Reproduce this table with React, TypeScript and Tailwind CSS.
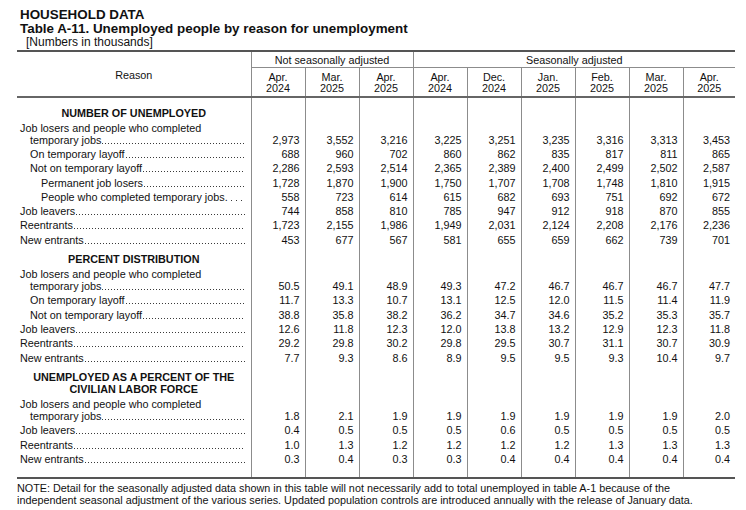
import React from "react";

type Row = { label: string; indent: 0 | 1 | 2; two?: boolean; spaced?: boolean; vals: string[] };
type Section = { heading: string[]; pt: string; rows: Row[] };

const sections: Section[] = [
  {
    heading: ["NUMBER OF UNEMPLOYED"],
    pt: "pt-[9px]",
    rows: [
      { label: "temporary jobs", indent: 0, two: true, vals: ["2,973", "3,552", "3,216", "3,225", "3,251", "3,235", "3,316", "3,313", "3,453"] },
      { label: "On temporary layoff", indent: 1, vals: ["688", "960", "702", "860", "862", "835", "817", "811", "865"] },
      { label: "Not on temporary layoff", indent: 1, vals: ["2,286", "2,593", "2,514", "2,365", "2,389", "2,400", "2,499", "2,502", "2,587"] },
      { label: "Permanent job losers", indent: 2, vals: ["1,728", "1,870", "1,900", "1,750", "1,707", "1,708", "1,748", "1,810", "1,915"] },
      { label: "People who completed temporary jobs.", indent: 2, spaced: true, vals: ["558", "723", "614", "615", "682", "693", "751", "692", "672"] },
      { label: "Job leavers", indent: 0, vals: ["744", "858", "810", "785", "947", "912", "918", "870", "855"] },
      { label: "Reentrants", indent: 0, vals: ["1,723", "2,155", "1,986", "1,949", "2,031", "2,124", "2,208", "2,176", "2,236"] },
      { label: "New entrants", indent: 0, vals: ["453", "677", "567", "581", "655", "659", "662", "739", "701"] },
    ],
  },
  {
    heading: ["PERCENT DISTRIBUTION"],
    pt: "pt-[7px]",
    rows: [
      { label: "temporary jobs", indent: 0, two: true, vals: ["50.5", "49.1", "48.9", "49.3", "47.2", "46.7", "46.7", "46.7", "47.7"] },
      { label: "On temporary layoff", indent: 1, vals: ["11.7", "13.3", "10.7", "13.1", "12.5", "12.0", "11.5", "11.4", "11.9"] },
      { label: "Not on temporary layoff", indent: 1, vals: ["38.8", "35.8", "38.2", "36.2", "34.7", "34.6", "35.2", "35.3", "35.7"] },
      { label: "Job leavers", indent: 0, vals: ["12.6", "11.8", "12.3", "12.0", "13.8", "13.2", "12.9", "12.3", "11.8"] },
      { label: "Reentrants", indent: 0, vals: ["29.2", "29.8", "30.2", "29.8", "29.5", "30.7", "31.1", "30.7", "30.9"] },
      { label: "New entrants", indent: 0, vals: ["7.7", "9.3", "8.6", "8.9", "9.5", "9.5", "9.3", "10.4", "9.7"] },
    ],
  },
  {
    heading: ["UNEMPLOYED AS A PERCENT OF THE", "CIVILIAN LABOR FORCE"],
    pt: "pt-[8px]",
    rows: [
      { label: "temporary jobs", indent: 0, two: true, vals: ["1.8", "2.1", "1.9", "1.9", "1.9", "1.9", "1.9", "1.9", "2.0"] },
      { label: "Job leavers", indent: 0, vals: ["0.4", "0.5", "0.5", "0.5", "0.6", "0.5", "0.5", "0.5", "0.5"] },
      { label: "Reentrants", indent: 0, vals: ["1.0", "1.3", "1.2", "1.2", "1.2", "1.2", "1.3", "1.3", "1.3"] },
      { label: "New entrants", indent: 0, vals: ["0.3", "0.4", "0.3", "0.3", "0.4", "0.4", "0.4", "0.4", "0.4"] },
    ],
  },
];

function Leader({ text, indent, spaced }: { text: string; indent: 0 | 1 | 2; spaced?: boolean }) {
  const pad = indent === 0 ? "pl-0" : indent === 1 ? "pl-[10px]" : "pl-[21px]";
  return (
    <div className={`flex ${pad}`}>
      <span className="whitespace-nowrap">{text}</span>
      {spaced ? (
        <span className="flex-1 ml-[3px] bg-[linear-gradient(to_right,#3a3a3a_1px,transparent_1px)] bg-[length:5px_1px] bg-repeat-x bg-[position:0_9px]" />
      ) : (
        <span className="flex-1 ml-[1px] bg-[linear-gradient(to_right,#3a3a3a_1px,transparent_1px)] bg-[length:3px_1px] bg-repeat-x bg-[position:0_9px]" />
      )}
    </div>
  );
}

const vline = "border-l border-[#8c8c8c]";
const months: [string, string][] = [
  ["Apr.", "2024"],
  ["Mar.", "2025"],
  ["Apr.", "2025"],
  ["Apr.", "2024"],
  ["Dec.", "2024"],
  ["Jan.", "2025"],
  ["Feb.", "2025"],
  ["Mar.", "2025"],
  ["Apr.", "2025"],
];

export default function App() {
  return (
    <div className="w-[746px] h-[510px] bg-white text-[#111] font-['Liberation_Sans',Arial,sans-serif] overflow-hidden">
      <div className="pl-[20px] pt-[7px] font-bold text-[13.4px] leading-[15px]">
        <div>HOUSEHOLD DATA</div>
        <div className="leading-[14px]">Table A-11. Unemployed people by reason for unemployment</div>
      </div>
      <div className="pl-[26px] pt-[1px] text-[12px] leading-[11px]">[Numbers in thousands]</div>
      <table className="ml-[17px] mt-[2px] w-[718px] table-fixed border-collapse border-t-2 border-b-2 border-[#555] text-[10.8px]">
        <colgroup>
          <col className="w-[234px]" />
          <col className="w-[54px]" />
          <col className="w-[54px]" />
          <col className="w-[54px]" />
          <col className="w-[54px]" />
          <col className="w-[54px]" />
          <col className="w-[54px]" />
          <col className="w-[54px]" />
          <col className="w-[54px]" />
          <col className="w-[52px]" />
        </colgroup>
        <thead>
          <tr>
            <th rowSpan={2} className="font-normal text-center align-middle border-b-2 border-[#666] leading-[12px] pt-[2px]">
              Reason
            </th>
            <th colSpan={3} className={`font-normal text-center ${vline} border-b border-b-[#8c8c8c] leading-[12px] pt-[2px] pb-[1px]`}>
              Not seasonally adjusted
            </th>
            <th colSpan={6} className={`font-normal text-center ${vline} border-b border-b-[#8c8c8c] leading-[12px] pt-[2px] pb-[1px]`}>
              Seasonally adjusted
            </th>
          </tr>
          <tr>
            {months.map(([m, y], i) => (
              <th key={i} className={`font-normal text-center ${vline} border-b-2 border-b-[#666] leading-[11.3px] pt-[3.5px] pb-[1.5px]`}>
                <div>{m}</div>
                <div>{y}</div>
              </th>
            ))}
          </tr>
        </thead>
        <tbody>
          {sections.map((s, si) => (
            <React.Fragment key={si}>
              <tr>
                <td className={`${s.pt} pb-[1px] text-center font-bold ${s.heading.length > 1 ? "leading-[11.7px]" : "leading-[12.3px]"}`}>
                  {s.heading.map((h, hi) => (
                    <div key={hi}>{h}</div>
                  ))}
                </td>
                {months.map((_, i) => (
                  <td key={i} className={vline}></td>
                ))}
              </tr>
              {s.rows.map((r, ri) => (
                <tr key={ri}>
                  <td className="pl-[3px] pr-[6px] pt-[2px] leading-[12.3px] align-bottom">
                    {r.two && <div className="whitespace-nowrap -mb-[0.5px]">Job losers and people who completed</div>}
                    <Leader text={r.label} indent={r.two ? 1 : r.indent} spaced={r.spaced} />
                  </td>
                  {r.vals.map((v, vi) => (
                    <td key={vi} className={`${vline} text-right pr-[5px] pt-[2px] leading-[12.3px] align-bottom`}>
                      {v}
                    </td>
                  ))}
                </tr>
              ))}
            </React.Fragment>
          ))}
          <tr className="h-[13px]">
            <td></td>
            {months.map((_, i) => (
              <td key={i} className={vline}></td>
            ))}
          </tr>
        </tbody>
      </table>
      <div className="pl-[17px] pt-[4px] text-[10.8px] leading-[11.7px]">
        NOTE: Detail for the seasonally adjusted data shown in this table will not necessarily add to total unemployed in table A-1 because of the
        <br />
        independent seasonal adjustment of the various series. Updated population controls are introduced annually with the release of January data.
      </div>
    </div>
  );
}
